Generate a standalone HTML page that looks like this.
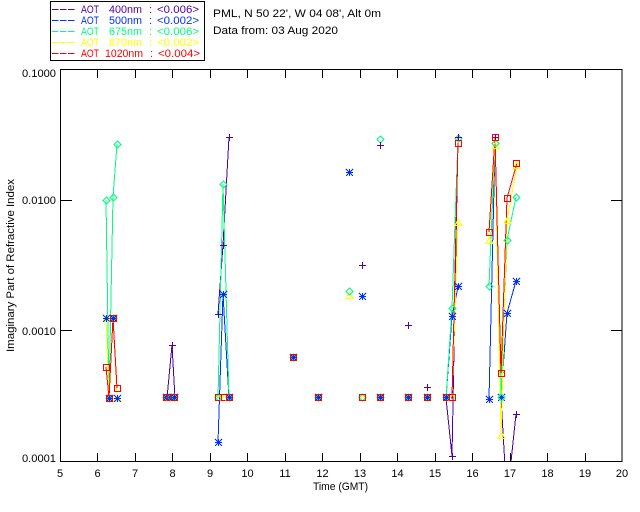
<!DOCTYPE html>
<html><head><meta charset="utf-8"><style>
html,body{margin:0;padding:0;background:#fff;width:640px;height:512px;overflow:hidden}
svg{display:block}
text{font-family:"Liberation Sans",sans-serif;font-size:11px;fill:#000}
.p{fill:#5000a0}.b{fill:#0030ff}.g{fill:#00ff80}.y{fill:#ffff00}.r{fill:#ff0000}
polyline{fill:none;stroke-width:1}
.ax line,.ax path{stroke:#000;stroke-width:1;fill:none}
</style></head><body>
<svg width="640" height="512" viewBox="0 0 640 512" xmlns="http://www.w3.org/2000/svg" shape-rendering="crispEdges">
<defs>
<clipPath id="c"><rect x="60" y="70" width="562" height="391"/></clipPath>
<g id="pl"><path d="M-3.5 0H3.5M0-3.5V3.5" stroke="#5000a0" fill="none"/></g>
<g id="st"><path d="M-3.5-3.5L3.5 3.5M3.5-3.5L-3.5 3.5M-3.5 0H3.5M0-3.5V3.5" stroke="#0030ff" fill="none"/><rect x="-1.5" y="-1.5" width="3" height="3" fill="#0030ff"/></g>
<g id="di"><path d="M0-3.5L3.5 0L0 3.5L-3.5 0Z" stroke="#00ff80" fill="none"/></g>
<g id="tr"><path d="M0-3.5L3.5 3H-3.5Z" stroke="#ffff00" fill="none"/></g>
<g id="sq"><rect x="-3" y="-3" width="6" height="6" stroke="#ff0000" stroke-width="1" fill="none"/></g>
<g id="cm"><use href="#tr"/><use href="#di"/><use href="#st"/><use href="#sq"/></g>
</defs>

<!-- legend -->
<rect x="50.5" y="1.5" width="154" height="59" fill="none" stroke="#000"/>
<g stroke-dasharray="6.5 1.5">
<line x1="52" x2="75" y1="9.5" y2="9.5" stroke="#5000a0"/>
<line x1="52" x2="75" y1="20.5" y2="20.5" stroke="#0030ff"/>
<line x1="52" x2="75" y1="31.5" y2="31.5" stroke="#00ff80"/>
<line x1="52" x2="75" y1="42.5" y2="42.5" stroke="#ffff00"/>
<line x1="52" x2="75" y1="53.5" y2="53.5" stroke="#ff0000"/>
</g>
<g shape-rendering="auto">
<text class="p" x="81" y="13" textLength="18" lengthAdjust="spacingAndGlyphs">AOT</text><text class="p" x="109" y="13" textLength="33" lengthAdjust="spacingAndGlyphs">400nm</text><text class="p" x="149" y="13">:</text><text class="p" x="157" y="13" textLength="42" lengthAdjust="spacingAndGlyphs">&lt;0.006&gt;</text>
<text class="b" x="81" y="24" textLength="18" lengthAdjust="spacingAndGlyphs">AOT</text><text class="b" x="109" y="24" textLength="33" lengthAdjust="spacingAndGlyphs">500nm</text><text class="b" x="149" y="24">:</text><text class="b" x="157" y="24" textLength="42" lengthAdjust="spacingAndGlyphs">&lt;0.002&gt;</text>
<text class="g" x="81" y="35" textLength="18" lengthAdjust="spacingAndGlyphs">AOT</text><text class="g" x="109" y="35" textLength="33" lengthAdjust="spacingAndGlyphs">675nm</text><text class="g" x="149" y="35">:</text><text class="g" x="157" y="35" textLength="42" lengthAdjust="spacingAndGlyphs">&lt;0.006&gt;</text>
<text class="y" x="81" y="46" textLength="18" lengthAdjust="spacingAndGlyphs">AOT</text><text class="y" x="109" y="46" textLength="33" lengthAdjust="spacingAndGlyphs">870nm</text><text class="y" x="149" y="46">:</text><text class="y" x="157" y="46" textLength="42" lengthAdjust="spacingAndGlyphs">&lt;0.002&gt;</text>
<text class="r" x="81" y="57" textLength="18" lengthAdjust="spacingAndGlyphs">AOT</text><text class="r" x="105" y="57" textLength="38" lengthAdjust="spacingAndGlyphs">1020nm</text><text class="r" x="150" y="57">:</text><text class="r" x="158" y="57" textLength="42" lengthAdjust="spacingAndGlyphs">&lt;0.004&gt;</text>
<text x="213" y="17" textLength="168" lengthAdjust="spacingAndGlyphs">PML, N 50 22', W 04 08', Alt 0m</text>
<text x="213" y="34" textLength="125" lengthAdjust="spacingAndGlyphs">Data from: 03 Aug 2020</text>
</g>

<!-- axes -->
<g class="ax">
<rect x="60.5" y="69.5" width="561.5" height="392" fill="none" stroke="#000"/>
<path d="M97.5 70V78M135.5 70V78M172.5 70V78M210.5 70V78M247.5 70V78M285.5 70V78M322.5 70V78M360.5 70V78M397.5 70V78M435.5 70V78M472.5 70V78M510.5 70V78M547.5 70V78M585.5 70V78"/>
<path d="M97.5 461V453M135.5 461V453M172.5 461V453M210.5 461V453M247.5 461V453M285.5 461V453M322.5 461V453M360.5 461V453M397.5 461V453M435.5 461V453M472.5 461V453M510.5 461V453M547.5 461V453M585.5 461V453"/>
<path d="M61 200.5H72M61 330.5H72M611 200.5H622M611 330.5H622"/>
</g>
<g shape-rendering="auto">
<text x="22" y="77" textLength="34" lengthAdjust="spacingAndGlyphs">0.1000</text>
<text x="22" y="204" textLength="34" lengthAdjust="spacingAndGlyphs">0.0100</text>
<text x="22" y="335" textLength="34" lengthAdjust="spacingAndGlyphs">0.0010</text>
<text x="22" y="462" textLength="34" lengthAdjust="spacingAndGlyphs">0.0001</text>
<g text-anchor="middle">
<text x="60" y="477">5</text><text x="97.5" y="477">6</text><text x="135" y="477">7</text><text x="172.5" y="477">8</text><text x="210" y="477">9</text><text x="247.5" y="477">10</text><text x="285" y="477">11</text><text x="322.5" y="477">12</text><text x="360" y="477">13</text><text x="397.5" y="477">14</text><text x="435" y="477">15</text><text x="472.5" y="477">16</text><text x="510" y="477">17</text><text x="547.5" y="477">18</text><text x="585" y="477">19</text><text x="622" y="477">20</text>
</g>
<text x="313" y="490" textLength="55" lengthAdjust="spacingAndGlyphs">Time (GMT)</text>
<text transform="translate(14 352) rotate(-90)" textLength="173" lengthAdjust="spacingAndGlyphs">Imaginary Part of Refractive Index</text>
</g>

<!-- series -->
<g clip-path="url(#c)">
<!-- purple -->
<g stroke="#5000a0">
<polyline points="167,398 172,345 175,398"/>
<polyline points="218,314 223,245 229,137"/>
<polyline points="446,398 452,456 458,137"/>
<polyline points="495,137 501,398 507,500 516,414"/>
</g>
<!-- blue -->
<g stroke="#0030ff">
<polyline points="106,318 109,398 113,318 117,398"/>
<polyline points="218,442 223,294 229,398"/>
<polyline points="446,398 452,316 458,287"/>
<polyline points="489,399 495,145 501,398 507,313 516,281"/>
</g>
<!-- green -->
<g stroke="#00ff80">
<polyline points="106,200 109,398 113,197 117,144"/>
<polyline points="218,398 223,184 229,398"/>
<polyline points="446,398 452,308 458,139"/>
<polyline points="489,286 495,143 501,398 507,240 516,197"/>
</g>
<!-- yellow -->
<g stroke="#ffff00">
<polyline points="106,318 109,398 113,318 117,398"/>
<polyline points="446,398 452,398 458,222"/>
<polyline points="489,240 495,145 501,435 507,220 517,165"/>
</g>
<!-- red -->
<g stroke="#ff0000">
<polyline points="106,367 109,398 113,318 117,388"/>
<polyline points="446,398 452,398 458,143"/>
<polyline points="489,232 495,137 501,373 507,198 517,163"/>
</g>

<!-- common markers -->
<use href="#cm" x="109.5" y="398.5"/>
<use href="#tr" x="117.5" y="398.5"/><use href="#st" x="117.5" y="398.5"/>
<use href="#tr" x="106.5" y="318.5"/><use href="#st" x="106.5" y="318.5"/>
<use href="#cm" x="113.5" y="318.5"/>
<use href="#sq" x="106.5" y="367.5"/><use href="#sq" x="117.5" y="388.5"/>
<use href="#di" x="106.5" y="200.5"/><use href="#di" x="113.5" y="197.5"/><use href="#di" x="117.5" y="144.5"/>
<use href="#cm" x="166.5" y="397.5"/><use href="#cm" x="170.5" y="397.5"/><use href="#cm" x="174.5" y="397.5"/>
<use href="#pl" x="172.5" y="345.5"/>
<use href="#tr" x="218.5" y="397.5"/><use href="#di" x="218.5" y="397.5"/><use href="#sq" x="218.5" y="397.5"/>
<use href="#tr" x="224.5" y="397.5"/><use href="#sq" x="224.5" y="397.5"/>
<use href="#cm" x="229.5" y="397.5"/>
<use href="#st" x="218.5" y="442.5"/><use href="#st" x="223.5" y="294.5"/>
<use href="#pl" x="218.5" y="314.5"/><use href="#pl" x="223.5" y="245.5"/><use href="#pl" x="229.5" y="137.5"/>
<use href="#di" x="223.5" y="184.5"/>
<use href="#cm" x="293.5" y="357.5"/>
<use href="#cm" x="318.5" y="397.5"/>
<use href="#tr" x="362.5" y="397.5"/><use href="#di" x="362.5" y="397.5"/><use href="#sq" x="362.5" y="397.5"/>
<use href="#cm" x="380.5" y="397.5"/>
<use href="#cm" x="408.5" y="397.5"/>
<use href="#cm" x="427.5" y="397.5"/>
<use href="#st" x="349.5" y="172.5"/>
<use href="#di" x="380.5" y="139.5"/><use href="#pl" x="380.5" y="145.5"/>
<use href="#pl" x="362.5" y="265.5"/><use href="#pl" x="408.5" y="325.5"/><use href="#pl" x="427.5" y="387.5"/>
<use href="#tr" x="349.5" y="295.5"/><use href="#di" x="349.5" y="291.5"/><use href="#st" x="362.5" y="296.5"/>
<use href="#cm" x="446.5" y="397.5"/>
<use href="#tr" x="452.5" y="397.5"/><use href="#sq" x="452.5" y="397.5"/>
<use href="#di" x="452.5" y="308.5"/><use href="#st" x="452.5" y="316.5"/><use href="#pl" x="452.5" y="456.5"/>
<use href="#tr" x="458.5" y="222.5"/><use href="#st" x="458.5" y="286.5"/><use href="#di" x="458.5" y="138.5"/><use href="#pl" x="458.5" y="137.5"/><use href="#sq" x="458.5" y="143.5"/>
<use href="#st" x="489.5" y="399.5"/><use href="#di" x="489.5" y="286.5"/><use href="#tr" x="489.5" y="240.5"/><use href="#sq" x="489.5" y="232.5"/>
<use href="#tr" x="495.5" y="145.5"/><use href="#di" x="495.5" y="143.5"/><use href="#pl" x="495.5" y="137.5"/><use href="#sq" x="495.5" y="137.5"/>
<use href="#tr" x="501.5" y="435.5"/><use href="#st" x="501.5" y="397.5"/><use href="#di" x="501.5" y="397.5"/><use href="#sq" x="501.5" y="373.5"/>
<use href="#st" x="507.5" y="313.5"/><use href="#di" x="507.5" y="240.5"/><use href="#tr" x="507.5" y="220.5"/><use href="#sq" x="507.5" y="198.5"/>
<use href="#st" x="516.5" y="281.5"/><use href="#di" x="516.5" y="197.5"/><use href="#tr" x="516.5" y="165.5"/><use href="#sq" x="516.5" y="163.5"/><use href="#pl" x="516.5" y="414.5"/>
</g>
</svg>
</body></html>
